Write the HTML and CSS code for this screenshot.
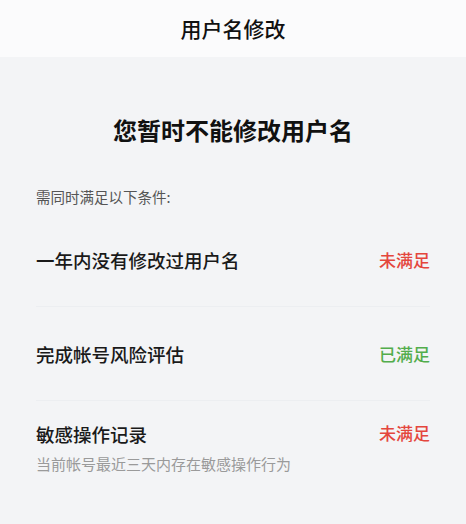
FILE: index.html
```html
<!DOCTYPE html>
<html lang="zh-CN">
<head>
<meta charset="UTF-8">
<meta name="viewport" content="width=device-width, initial-scale=1.0">
<title>用户名修改</title>
<link rel="stylesheet" href="styles.css">
</head>
<body>

<div class="topbar">用户名修改</div>

<div class="content">
    <h1 class="notice">您暂时不能修改用户名</h1>
    <p class="intro">需同时满足以下条件:</p>

    <!-- Conditions -->
    <div class="cond-list">
        <div class="cond">
            <div class="cond-text">
                <div class="cond-title">一年内没有修改过用户名</div>
            </div>
            <span class="status status-no">未满足</span>
        </div>
        <div class="cond">
            <div class="cond-text">
                <div class="cond-title">完成帐号风险评估</div>
            </div>
            <span class="status status-ok">已满足</span>
        </div>
        <div class="cond">
            <div class="cond-text">
                <div class="cond-title">敏感操作记录</div>
                <div class="cond-desc">当前帐号最近三天内存在敏感操作行为</div>
            </div>
            <span class="status status-no">未满足</span>
        </div>
    </div>
</div>

</body>
</html>
```

FILE: styles.css
```css
body {
    margin: 0;
    font-family: "Noto Sans CJK SC", "Noto Sans", sans-serif;
    background-color: #f3f4f6;
    color: #1a1a1a;
    min-height: 524px;
}

.topbar {
    height: 57px;
    line-height: 57px;
    background-color: #fbfbfc;
    text-align: center;
    font-size: 21px;
    font-weight: 500;
    color: #111;
}

.content {
    padding: 0 36px;
}

.notice {
    margin: 56px 0 0;
    text-align: center;
    font-size: 24px;
    line-height: 34px;
    font-weight: 600;
    color: #111;
}

.intro {
    margin: 40px 0 0;
    font-size: 14.5px;
    line-height: 20px;
    color: #555;
}

.cond-list {
    margin-top: 6px;
}

.cond {
    display: flex;
    align-items: center;
    justify-content: space-between;
    height: 94px;
    box-sizing: border-box;
    border-bottom: 1px solid #eceef1;
}

.cond:last-child {
    border-bottom: none;
}

.cond-title {
    font-size: 18.5px;
    line-height: 26px;
    font-weight: 500;
}

.cond-desc {
    margin-top: 6px;
    font-size: 15px;
    line-height: 22px;
    color: #9a9a9a;
}

.cond:last-child .status {
    align-self: flex-start;
    margin-top: 19px;
}

.status {
    font-size: 17px;
    line-height: 26px;
    font-weight: 500;
}

.status-no {
    color: #e4463d;
}

.status-ok {
    color: #52ad4c;
}
```
